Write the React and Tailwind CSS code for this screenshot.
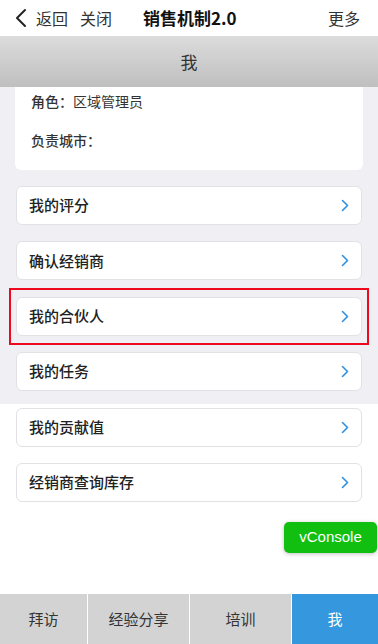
import React from "react";

const items = ["我的评分", "确认经销商", "我的合伙人", "我的任务", "我的贡献值", "经销商查询库存"];
const tabs = [
  { label: "拜访", w: "w-[87px]" },
  { label: "经验分享", w: "w-[101px]" },
  { label: "培训", w: "w-[101px]" },
  { label: "我", w: "flex-1", active: true },
];

const Chevron = () => (
  <svg width="8" height="13" viewBox="0 0 8 13" fill="none">
    <path d="M1.5 1.5l5 5-5 5" stroke="#2f8fe0" strokeWidth="1.6" strokeLinecap="round" strokeLinejoin="round" />
  </svg>
);

const App = () => {
  return (
    <div className="relative min-h-screen w-full bg-white font-['Noto_Sans_CJK_SC',sans-serif] text-[#333]">
      {/* app nav bar */}
      <div className="flex h-9 items-center bg-white px-[15px] text-[16px]">
        <svg width="12" height="20" viewBox="0 0 12 20" className="mr-[9px]" fill="none">
          <path d="M10 2L2 10l8 8" stroke="#222" strokeWidth="2" strokeLinecap="round" strokeLinejoin="round" />
        </svg>
        <span>返回</span>
        <span className="ml-3">关闭</span>
        <span className="ml-[31px] text-[17px] font-bold text-[#111]">销售机制2.0</span>
        <span className="ml-auto mr-[3px] text-[16px]">更多</span>
      </div>

      <div className="flex h-[51px] items-center justify-center bg-[linear-gradient(#dcdcdc,#bfbfbf)] text-[17px] text-[#333]">
        我
      </div>

      <div className="bg-[linear-gradient(#efeff4_0,#efeff4_317px,#fff_317px)] pb-[92px]">
        <div className="mx-[15px] flex h-[83px] flex-col rounded-b-[6px] bg-white pl-4 text-[14px]">
          <div className="mt-[4px] leading-[20px]">
            <span className="font-medium">角色：</span>区域管理员
          </div>
          <div className="mt-[19px] leading-[20px] font-medium">负责城市：</div>
        </div>

        <div className="mx-4 mt-4 flex flex-col gap-[16.4px]">
          {items.map((t, i) => (
            <div
              key={t}
              className="relative flex h-[39px] items-center justify-between rounded-[6px] border border-[#e2e2e6] bg-white pl-3 pr-3 text-[15px] font-medium text-[#222]"
            >
              <span>{t}</span>
              <Chevron />
              {i === 2 && (
                <div className="pointer-events-none absolute -left-2 -right-2 -top-[10px] -bottom-[10px] border-2 border-[#ee0a1e]" />
              )}
            </div>
          ))}
        </div>
      </div>

      <div className="absolute right-px top-[522px] flex h-[31px] w-[93px] items-center justify-center rounded-[5px] bg-[#10bf10] font-['Liberation_Sans',sans-serif] text-[15px] text-white shadow-[0_1px_4px_rgba(0,0,0,0.25)]">
        vConsole
      </div>

      <div className="fixed bottom-0 left-0 right-0 flex h-[50px] gap-px bg-white text-[15px]">
        {tabs.map((t) => (
          <div
            key={t.label}
            className={`${t.w} flex items-center justify-center ${t.active ? "bg-[#3597de] text-white" : "bg-[#d3d3d3] text-[#333]"}`}
          >
            {t.label}
          </div>
        ))}
      </div>
    </div>
  );
};

export default App;
